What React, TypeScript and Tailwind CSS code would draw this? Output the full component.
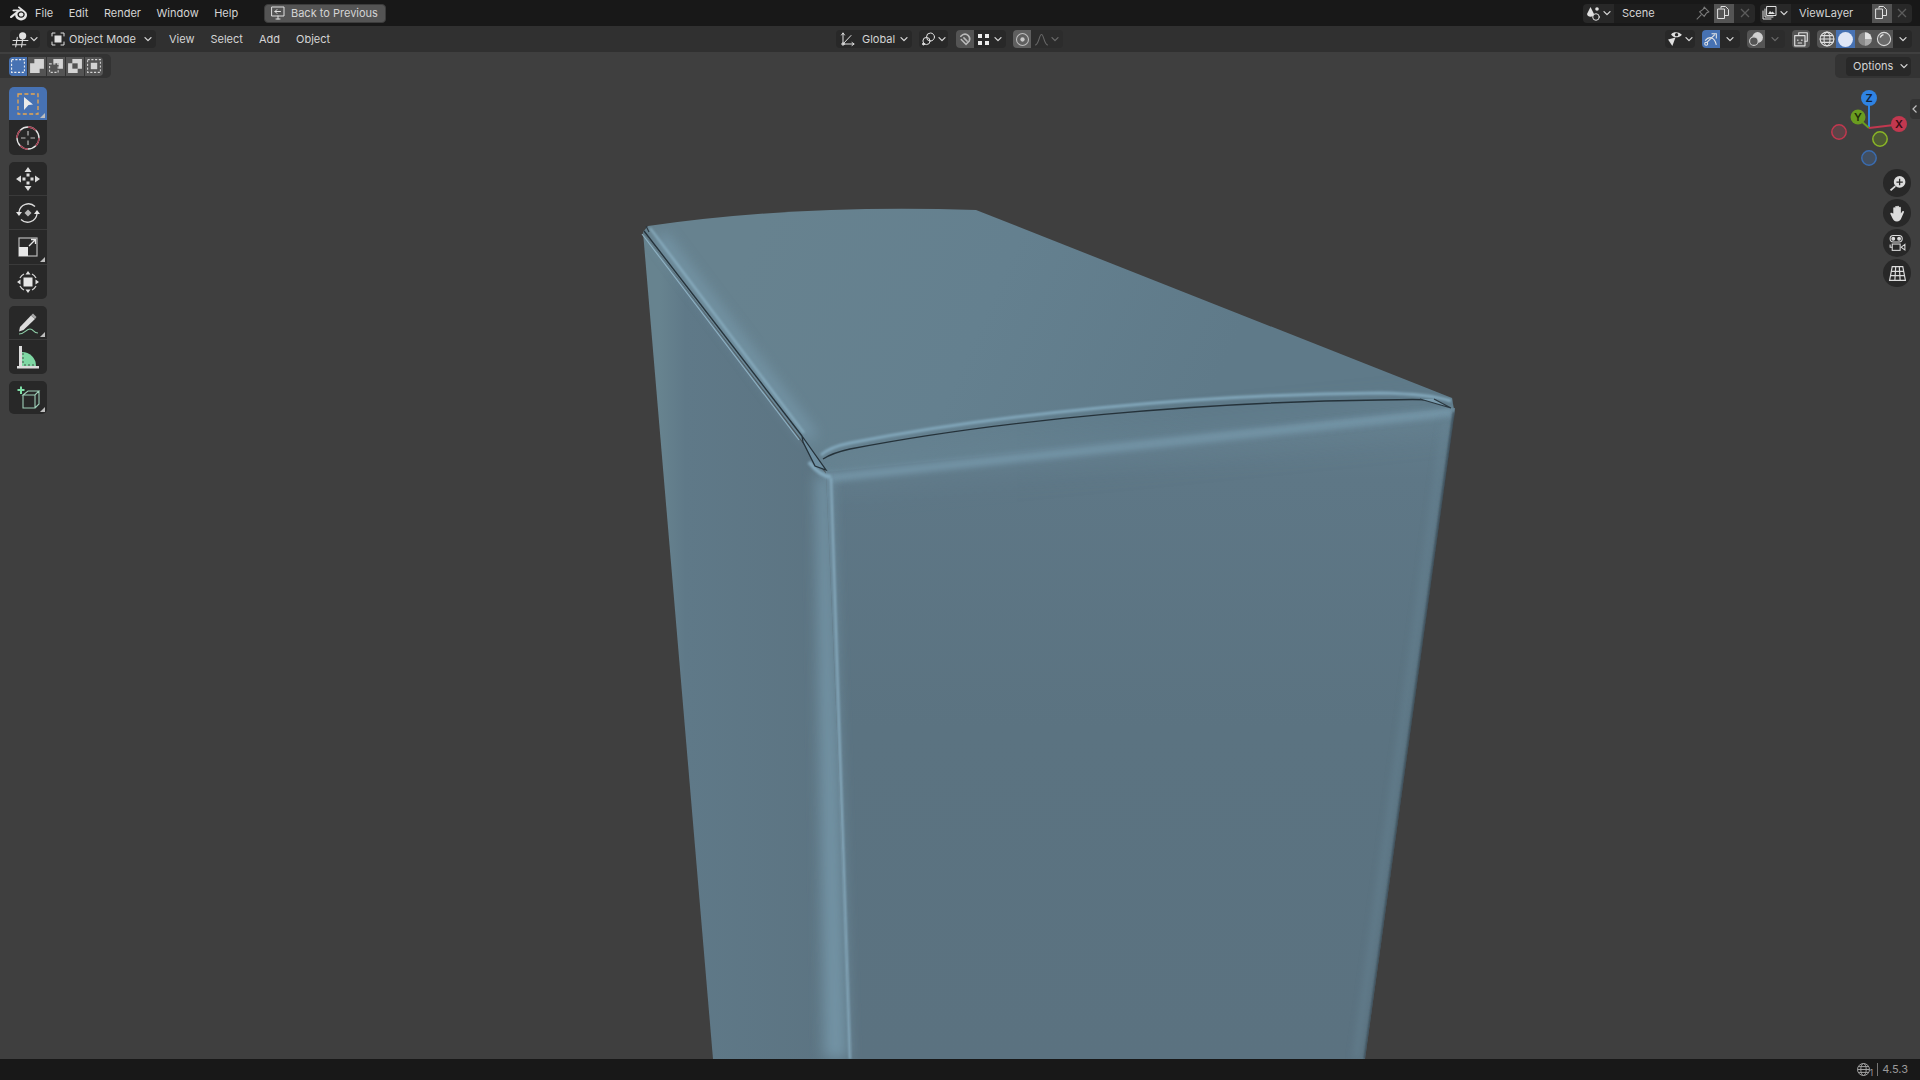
import React from "react";
import { SiBlender } from "react-icons/si";

const Chev = ({ dim = false }: { dim?: boolean }) => (
  <svg width="10" height="10" viewBox="0 0 10 10" fill="none" stroke={dim ? "#6a6a6a" : "#d8d8d8"} strokeWidth="1.3" strokeLinecap="round" strokeLinejoin="round">
    <path d="M2 3.6 L5 6.6 L8 3.6" />
  </svg>
);

const S = ({ children, size = 16, vb = 16 }: { children: React.ReactNode; size?: number; vb?: number }) => (
  <svg width={size} height={size} viewBox={`0 0 ${vb} ${vb}`} fill="none" stroke="#e0e0e0" strokeWidth="1" strokeLinecap="round" strokeLinejoin="round">
    {children}
  </svg>
);

const Tool = ({ active, corner, children, cls }: { active?: boolean; corner?: boolean; children: React.ReactNode; cls: string }) => (
  <div className={`relative w-[38px] flex items-center justify-center ${cls} ${active ? "bg-[#4772b3]" : "bg-[#282828]"}`}>
    {children}
    {corner && (
      <svg className="absolute right-[2px] bottom-[2px]" width="5" height="5" viewBox="0 0 5 5">
        <path d="M5 0 V5 H0 Z" fill="#bdbdbd" />
      </svg>
    )}
  </div>
);

const Nav = ({ children }: { children: React.ReactNode }) => (
  <div className="w-[28px] h-[28px] rounded-full bg-[#282828] flex items-center justify-center">{children}</div>
);

const Sphere = () => (
  <svg width="17" height="17" viewBox="0 0 16 16"><circle cx="8" cy="8" r="7" fill="#dfe6f5" /></svg>
);

export default function App() {
  return (
    <div className="w-[1920px] h-[1080px] flex flex-col overflow-hidden bg-[#3f3f3f] font-[Inter,sans-serif] text-[11px] text-[#d4d4d4]">
      {/* Top bar */}
      <div className="h-[26px] shrink-0 bg-[#181818] flex items-center">
        <div className="ml-[9px] w-[18px] flex justify-center text-[#e6e6e6]"><SiBlender size={17} /></div>
        <div className="ml-[8px] w-[204px] flex gap-[15.5px]">
          <span>File</span><span>Edit</span><span>Render</span><span>Window</span><span>Help</span>
        </div>
        <div className="ml-[25px] w-[122px] h-[19px] rounded-[4px] bg-[#545454] flex items-center border border-[#3c3c3c]">
          <div className="ml-[4px] w-[18px] flex justify-center">
            <S size={16}>
              <rect x="2" y="2" width="12" height="9" />
              <path d="M6 14 H10 M8 11 V14 M10.5 6.5 H5 M7 4.5 L5 6.5 L7 8.5" />
            </S>
          </div>
          <span className="ml-[4px] whitespace-nowrap">Back to Previous</span>
        </div>
        <div className="ml-auto mr-[8px] flex items-center gap-[5px]">
          <div className="flex h-[19px] w-[172px] rounded-[4px] overflow-hidden bg-[#282828]">
            <div className="w-[31px] flex items-center justify-center gap-[1px]">
              <S size={16}>
                <path d="M5.5 2 L9 9 A3.6 3.6 0 0 1 2 9 Z" fill="#e0e0e0" stroke="none" />
                <circle cx="12" cy="4" r="1.8" fill="#e0e0e0" stroke="none" />
                <circle cx="11" cy="12" r="3.3" />
              </S>
              <Chev />
            </div>
            <div className="w-[100px] bg-[#1d1d1d] flex items-center pl-[8px] relative">
              Scene
              <svg className="absolute right-[4px] top-[2px]" width="15" height="15" viewBox="0 0 13 13" fill="none" stroke="#7a7a7a" strokeWidth="0.9">
                <path d="M8 1 L12 5 L10 6 L8 9 L4 5 L7 3 Z M5.5 7.5 L1.5 11.5" />
              </svg>
            </div>
            <div className="w-[20px] bg-[#545454] flex items-center justify-center">
              <S size={16}><path d="M5 3 V1.5 H9.5 L12.5 4.5 V10.5 H9 M2 4 H8.5 V13.5 H2 Z" /></S>
            </div>
            <div className="w-[21px] flex items-center justify-center">
              <svg width="10" height="10" viewBox="0 0 10 10" stroke="#5c5c5c" strokeWidth="1.3"><path d="M1 1 L9 9 M9 1 L1 9" /></svg>
            </div>
          </div>
          <div className="flex h-[19px] w-[152px] rounded-[4px] overflow-hidden bg-[#282828]">
            <div className="w-[31px] flex items-center justify-center gap-[1px]">
              <S size={16}>
                <rect x="5" y="1.5" width="9" height="9" />
                <path d="M3 4 V12 H11 M1 6 V14 H9" />
                <path d="M6 9 L8 6 L9.5 7.5 L10.5 6.5 L13 9 Z" fill="#e0e0e0" stroke="none" />
              </S>
              <Chev />
            </div>
            <div className="w-[81px] bg-[#1d1d1d] flex items-center pl-[8px]">ViewLayer</div>
            <div className="w-[20px] bg-[#545454] flex items-center justify-center">
              <S size={16}><path d="M5 3 V1.5 H9.5 L12.5 4.5 V10.5 H9 M2 4 H8.5 V13.5 H2 Z" /></S>
            </div>
            <div className="w-[20px] flex items-center justify-center">
              <svg width="10" height="10" viewBox="0 0 10 10" stroke="#5c5c5c" strokeWidth="1.3"><path d="M1 1 L9 9 M9 1 L1 9" /></svg>
            </div>
          </div>
        </div>
      </div>

      {/* Header */}
      <div className="h-[26px] shrink-0 bg-[#303030] flex items-center relative">
        <div className="ml-[10px] w-[30px] h-[18px] rounded-[4px] bg-[#282828] flex items-center justify-center">
          <S size={17}>
            <circle cx="10" cy="4.5" r="3.4" fill="#e0e0e0" stroke="none" />
            <path d="M1 9 H15 M0.5 13 H13 M5 6 L3.5 15 M10 8 L9 15" />
          </S>
          <Chev />
        </div>
        <div className="ml-[7px] w-[109px] h-[18px] rounded-[4px] bg-[#282828] flex items-center">
          <div className="ml-[3px]">
            <S size={16}>
              <rect x="4.5" y="4.5" width="7" height="7" fill="#e0e0e0" stroke="none" />
              <path d="M2 5 V2 H5 M11 2 H14 V5 M14 11 V14 H11 M5 14 H2 V11" />
            </S>
          </div>
          <span className="ml-[3px] whitespace-nowrap">Object Mode</span>
          <div className="ml-auto mr-[3px]"><Chev /></div>
        </div>
        <div className="ml-[13px] w-[158px] flex gap-[16px]">
          <span>View</span><span>Select</span><span>Add</span><span>Object</span>
        </div>

        {/* center */}
        <div className="ml-[509px] w-[76px] h-[18px] rounded-[4px] bg-[#282828] flex items-center">
          <div className="ml-[4px]">
            <S size={16}>
              <path d="M3 13 L3 2 M1.5 4 L3 2 L4.5 4 M3 13 L14 13 M12 11.5 L14 13 L12 14.5 M3 13 L11 4.5" />
              <circle cx="3" cy="13" r="1.2" />
            </S>
          </div>
          <span className="ml-[6px]">Global</span>
          <div className="ml-auto mr-[3px]"><Chev /></div>
        </div>
        <div className="ml-[7px] w-[29px] h-[18px] rounded-[4px] bg-[#282828] flex items-center justify-center">
          <S size={16}>
            <circle cx="9.5" cy="6" r="4" />
            <circle cx="5.5" cy="10" r="3.6" />
            <circle cx="2.5" cy="13" r="1" fill="#e0e0e0" />
          </S>
          <Chev />
        </div>
        <div className="ml-[8px] w-[50px] h-[18px] rounded-[4px] overflow-hidden bg-[#282828] flex">
          <div className="w-[18px] bg-[#545454] flex items-center justify-center">
            <svg width="15" height="15" viewBox="0 0 14 14" fill="none" stroke="#b8b8b8" strokeWidth="1.4" strokeLinecap="round">
              <path d="M3 7 L7.5 11.5 L10.5 8.5 A4.5 4.5 0 0 0 4.5 2.5 L2.5 4" />
              <path d="M5.5 5.5 L8.5 8.5" />
            </svg>
          </div>
          <div className="flex-1 flex items-center justify-center gap-[3px]">
            <svg width="13" height="13" viewBox="0 0 13 13" fill="#ececec"><rect x="1" y="1" width="4" height="4" /><rect x="8" y="1" width="4" height="4" /><rect x="1" y="8" width="4" height="4" /><rect x="8" y="8" width="4" height="4" /></svg>
            <Chev />
          </div>
        </div>
        <div className="ml-[7px] w-[50px] h-[18px] rounded-[4px] overflow-hidden bg-[#2c2c2c] flex">
          <div className="w-[18px] bg-[#5f5f5f] flex items-center justify-center">
            <svg width="15" height="15" viewBox="0 0 14 14" fill="none"><circle cx="7" cy="7" r="5.6" stroke="#bcbcbc" strokeWidth="1" /><circle cx="7" cy="7" r="2" fill="#c8c8c8" /></svg>
          </div>
          <div className="flex-1 flex items-center justify-center gap-[1px]">
            <svg width="15" height="13" viewBox="0 0 15 13" fill="none" stroke="#666" strokeWidth="1.1"><path d="M1 12 C5 12 5 1.5 7.5 1.5 C10 1.5 10 12 14 12" /></svg>
            <Chev dim />
          </div>
        </div>

        {/* right */}
        <div className="ml-auto mr-[8px] flex items-center">
          <div className="w-[30px] h-[18px] rounded-[4px] bg-[#282828] flex items-center justify-center">
            <svg width="17" height="16" viewBox="0 0 16 15" fill="#e0e0e0">
              <path d="M1 8 L8 6 L5 14 Z" />
              <path d="M4 3 C6 0.5 11 0.5 14 3.5 C11 7 6 6.5 4 3.5 Z" />
              <circle cx="9" cy="3.4" r="1.6" fill="#282828" />
            </svg>
            <Chev />
          </div>
          <div className="ml-[7px] w-[38px] h-[18px] rounded-[4px] overflow-hidden bg-[#282828] flex">
            <div className="w-[18px] bg-[#4772b3] flex items-center justify-center">
              <svg width="16" height="16" viewBox="0 0 15 15" fill="none" stroke="#e6e6e6" strokeWidth="1">
                <path d="M3.5 11 L11 3.5 M8 2.5 H12.5 V7 M2 9 C6 4 11 6 12.5 13" />
                <circle cx="3" cy="12" r="1.4" />
              </svg>
            </div>
            <div className="flex-1 flex items-center justify-center"><Chev /></div>
          </div>
          <div className="ml-[7px] w-[38px] h-[18px] rounded-[4px] overflow-hidden bg-[#2c2c2c] flex">
            <div className="w-[18px] bg-[#545454] flex items-center justify-center">
              <svg width="16" height="16" viewBox="0 0 15 15" fill="none">
                <circle cx="9" cy="6" r="5" fill="#d0d0d0" />
                <circle cx="5.5" cy="9.5" r="4" fill="#545454" stroke="#d0d0d0" strokeWidth="1" />
              </svg>
            </div>
            <div className="flex-1 flex items-center justify-center"><Chev dim /></div>
          </div>
          <div className="ml-[7px] w-[18px] h-[18px] rounded-[4px] bg-[#545454] flex items-center justify-center">
            <S size={16} vb={14}>
              <path d="M5 3 V1.5 H12.5 V9 H10.5" />
              <rect x="1.5" y="4" width="9" height="9" />
              <path d="M4 8 H4.4 M7.5 8 H8 M4.5 10.5 H7.5" />
            </S>
          </div>
          <div className="ml-[7px] w-[95px] h-[18px] rounded-[4px] overflow-hidden bg-[#282828] flex">
            <div className="w-[19px] bg-[#545454] flex items-center justify-center">
              <S size={16} vb={14}>
                <circle cx="7" cy="7" r="6" />
                <ellipse cx="7" cy="7" rx="2.6" ry="6" />
                <path d="M1 7 H13 M2 4 H12 M2 10 H12" />
              </S>
            </div>
            <div className="w-[19px] bg-[#4772b3] flex items-center justify-center"><Sphere /></div>
            <div className="w-[19px] bg-[#545454] flex items-center justify-center">
              <svg width="16" height="16" viewBox="0 0 15 15"><circle cx="7.5" cy="7.5" r="6.4" fill="#8a8a8a" /><path d="M7.5 1.1 A6.4 6.4 0 0 1 13.9 7.5 L7.5 7.5 Z" fill="#e0e0e0" /><path d="M7.5 7.5 L13.9 7.5 A6.4 6.4 0 0 1 7.5 13.9 Z" fill="#a8a8a8" /></svg>
            </div>
            <div className="w-[19px] bg-[#545454] flex items-center justify-center">
              <svg width="16" height="16" viewBox="0 0 15 15" fill="none"><circle cx="7.5" cy="7.5" r="6.2" fill="#6a6a6a" stroke="#d8d8d8" strokeWidth="1" /><path d="M4 6 A4 4 0 0 1 7 3.4" stroke="#ececec" strokeWidth="1.3" /></svg>
            </div>
            <div className="flex-1 flex items-center justify-center"><Chev /></div>
          </div>
        </div>
      </div>

      {/* Viewport */}
      <div className="relative flex-1 bg-[#3f3f3f] overflow-hidden">
        <svg className="absolute inset-0 w-full h-full" viewBox="0 52 1920 1007" preserveAspectRatio="none">
          <defs>
            <filter id="b1" filterUnits="userSpaceOnUse" x="500" y="100" width="1100" height="1000"><feGaussianBlur stdDeviation="1.1" /></filter>
            <filter id="b3" filterUnits="userSpaceOnUse" x="500" y="100" width="1100" height="1000"><feGaussianBlur stdDeviation="3.5" /></filter>
            <filter id="b6" filterUnits="userSpaceOnUse" x="500" y="100" width="1100" height="1000"><feGaussianBlur stdDeviation="7" /></filter>
            <filter id="b16" filterUnits="userSpaceOnUse" x="500" y="100" width="1100" height="1000"><feGaussianBlur stdDeviation="16" /></filter>
            <linearGradient id="top" gradientUnits="userSpaceOnUse" x1="760" y1="220" x2="1200" y2="420">
              <stop offset="0" stopColor="#67828f" />
              <stop offset="0.5" stopColor="#64808f" />
              <stop offset="1" stopColor="#5f7a89" />
            </linearGradient>
            <linearGradient id="left" gradientUnits="userSpaceOnUse" x1="660" y1="0" x2="830" y2="0">
              <stop offset="0" stopColor="#67838f" />
              <stop offset="0.15" stopColor="#5f7988" />
              <stop offset="1" stopColor="#5c7482" />
            </linearGradient>
            <linearGradient id="right" gradientUnits="userSpaceOnUse" x1="0" y1="400" x2="0" y2="1059">
              <stop offset="0" stopColor="#647f8e" />
              <stop offset="0.12" stopColor="#5e7786" />
              <stop offset="0.5" stopColor="#5b7381" />
              <stop offset="1" stopColor="#5b7280" />
            </linearGradient>
            <clipPath id="boxclip">
              <path d="M648 226 Q800 204 976 210 L1452 398 L1455 412 L1365 1059 L713 1059 L643 232 Z" />
            </clipPath>
          </defs>

          {/* faces */}
          <path d="M648 226 Q800 204 976 210 L1452 398 L1454 410 L829 476 L643 232 Z" fill="url(#top)" />
          <path d="M643 232 L826 474 L851 1059 L713 1059 Z" fill="url(#left)" />
          <path d="M826 472 L1455 408 L1365 1059 L851 1059 Z" fill="url(#right)" />

          <g clipPath="url(#boxclip)">
            <path d="M660 236 L812 438" stroke="#7a9db0" strokeWidth="12" opacity="0.75" fill="none" filter="url(#b6)" />
            <path d="M828 478 L1454 412" stroke="#82a7bb" strokeWidth="6" opacity="0.9" fill="none" filter="url(#b3)" />
            <path d="M832 476 L1448 414" stroke="#6e8e9f" strokeWidth="22" opacity="0.35" fill="none" filter="url(#b16)" />
            {/* vertical crease */}
            <path d="M816 476 L830 476 L848 1059 L824 1059 Z" fill="#7697a9" opacity="0.9" filter="url(#b6)" />
            <path d="M831 478 L850 1059" stroke="#8aafc3" strokeWidth="2" fill="none" filter="url(#b1)" />
            {/* right edge */}
            <path d="M1446 420 L1356 1059" stroke="#6a8898" strokeWidth="8" opacity="0.4" fill="none" filter="url(#b3)" />
            <path d="M1454 412 L1365 1059" stroke="#33424c" strokeWidth="2" fill="none" filter="url(#b1)" />
          </g>
          <path d="M809 462 Q820 476 831 477" stroke="#83a8bc" strokeWidth="4" fill="none" filter="url(#b1)" />

          {/* top seam highlight */}
          <path d="M821 455 Q830 447 850 443 C1000 414 1200 394 1380 393 Q1430 394 1451 401" stroke="#82a7bb" strokeWidth="3" fill="none" filter="url(#b1)" />
          <path d="M823 459 Q832 453 850 449 C1000 420 1200 402 1380 400 Q1420 399 1430 400" stroke="#25323a" strokeWidth="1.4" fill="none" />
          <path d="M1420 399 L1451 408 L1434 399" stroke="#2b3840" strokeWidth="1.3" fill="#7a9cae" />

          {/* left seam */}
          <path d="M648 229 L802 434" stroke="#8bb0c3" strokeWidth="2" fill="none" filter="url(#b1)" transform="translate(2 -1)" />
          <path d="M644 231 L802 436" stroke="#25323a" strokeWidth="1.4" fill="none" />
          <path d="M643 233 L800 439" stroke="#8fb2c4" strokeWidth="1.1" fill="none" transform="translate(-1 1)" />
          <path d="M802 436 L826 470 L815 466 L803 442 Z" fill="#6d8ea0" stroke="#25323a" strokeWidth="1.3" />
          <path d="M646 226 L649 232" stroke="#2b3840" strokeWidth="1.1" />
        </svg>

        {/* Tool settings strip */}
        <div className="absolute left-0 top-[2px] w-[111px] h-[24px] bg-[#333333] rounded-r-[5px] flex items-center pl-[9px]">
          <div className="flex h-[19px] rounded-[4px] overflow-hidden gap-px">
            <div className="w-[18px] bg-[#4772b3] flex items-center justify-center">
              <svg width="16" height="16" viewBox="0 0 15 15" fill="none"><rect x="1.5" y="1.5" width="12" height="12" stroke="#f0f0f0" strokeDasharray="2 1.5" /></svg>
            </div>
            <div className="w-[18px] bg-[#545454] flex items-center justify-center">
              <svg width="16" height="16" viewBox="0 0 15 15" fill="#d4d4d4"><path d="M5 1 H14 V10 H10 V14 H1 V5 H5 Z" /></svg>
            </div>
            <div className="w-[18px] bg-[#545454] flex items-center justify-center">
              <svg width="16" height="16" viewBox="0 0 15 15"><path d="M5 1 H14 V10 H10 V5 H5 Z" fill="#d4d4d4" /><rect x="1.5" y="5.5" width="8" height="8" fill="none" stroke="#d4d4d4" strokeDasharray="2 1.5" /></svg>
            </div>
            <div className="w-[18px] bg-[#545454] flex items-center justify-center">
              <svg width="16" height="16" viewBox="0 0 15 15"><path d="M5 1 H14 V10 H10 V14 H1 V5 H5 Z" fill="#d4d4d4" /><rect x="5" y="5" width="5" height="5" fill="#545454" /></svg>
            </div>
            <div className="w-[18px] bg-[#545454] flex items-center justify-center">
              <svg width="16" height="16" viewBox="0 0 15 15"><rect x="1.5" y="1.5" width="12" height="12" fill="none" stroke="#d4d4d4" strokeDasharray="2 1.5" /><rect x="4.5" y="4.5" width="6" height="6" fill="#d4d4d4" /></svg>
            </div>
          </div>
        </div>

        {/* Options */}
        <div className="absolute right-0 top-[2px] w-[85px] h-[24px] bg-[#333333] rounded-l-[5px] flex items-center">
          <div className="ml-[11px] w-[65px] h-[19px] rounded-[4px] bg-[#282828] flex items-center pl-[7px]">
            Options
            <div className="ml-auto mr-[2px]"><Chev /></div>
          </div>
        </div>

        {/* Toolbar */}
        <div className="absolute left-[9px] top-[35px] flex flex-col">
          <Tool active corner cls="h-[33px] rounded-t-[5px]">
            <svg width="26" height="26" viewBox="0 0 26 26" fill="none">
              <rect x="3" y="3" width="20" height="20" stroke="#e8a650" strokeWidth="1.3" strokeDasharray="4 2.4" />
              <path d="M9 6 L18 13.5 L13.5 14 L9 19 Z" fill="#eaeaea" />
            </svg>
          </Tool>
          <Tool cls="h-[35px] rounded-b-[5px]">
            <svg width="26" height="26" viewBox="0 0 26 26" fill="none">
              <circle cx="13" cy="13" r="11" stroke="#e6e6e6" strokeWidth="1.3" />
              <circle cx="13" cy="13" r="11" stroke="#a03a4c" strokeWidth="1.3" strokeDasharray="8.6 8.6" />
              <path d="M13 6 V10.5 M13 15.5 V20 M6 13 H10.5 M15.5 13 H20" stroke="#bcbcbc" strokeWidth="1.2" />
            </svg>
          </Tool>
          <div className="h-[7px]" />
          <Tool cls="h-[34px] rounded-t-[5px] border-b border-[#3a3a3a]">
            <svg width="26" height="26" viewBox="0 0 26 26" fill="#dcdcdc">
              <path d="M13 1 L16.5 6 H9.5 Z M13 25 L9.5 20 H16.5 Z M1 13 L6 9.5 V16.5 Z M25 13 L20 16.5 V9.5 Z" />
              <rect x="11.5" y="7.5" width="3" height="3" /><rect x="11.5" y="15.5" width="3" height="3" /><rect x="7.5" y="11.5" width="3" height="3" /><rect x="15.5" y="11.5" width="3" height="3" />
            </svg>
          </Tool>
          <Tool cls="h-[34px] border-b border-[#3a3a3a]">
            <svg width="26" height="26" viewBox="0 0 26 26" fill="none">
              <path d="M4 12 A9.5 9.5 0 0 1 20 6.5 M22 14 A9.5 9.5 0 0 1 6 19.5" stroke="#dcdcdc" strokeWidth="1.3" />
              <path d="M1 12 H7 L4 16 Z M25 14 H19 L22 10 Z" fill="#e6e6e6" />
              <path d="M13 9.5 L16.5 13 L13 16.5 L9.5 13 Z" fill="#b8b8b8" />
            </svg>
          </Tool>
          <Tool corner cls="h-[35px] border-b border-[#3a3a3a]">
            <svg width="26" height="26" viewBox="0 0 26 26" fill="none">
              <rect x="4" y="4" width="18" height="18" stroke="#b8b8b8" strokeWidth="1.2" />
              <rect x="4" y="13" width="9" height="9" fill="#e6e6e6" />
              <path d="M14 12 L20.5 5.5 M16 5.5 H20.5 V10" stroke="#e6e6e6" strokeWidth="1.3" />
            </svg>
          </Tool>
          <Tool cls="h-[34px] rounded-b-[5px]">
            <svg width="26" height="26" viewBox="0 0 26 26" fill="none">
              <rect x="8.5" y="8.5" width="9" height="9" fill="#e6e6e6" />
              <path d="M5 9 A10 10 0 0 1 9 5 M17 5 A10 10 0 0 1 21 9 M21 17 A10 10 0 0 1 17 21 M9 21 A10 10 0 0 1 5 17" stroke="#d4d4d4" strokeWidth="1.3" />
              <path d="M13 2 L15.5 5.5 H10.5 Z M13 24 L10.5 20.5 H15.5 Z M2 13 L5.5 10.5 V15.5 Z M24 13 L20.5 15.5 V10.5 Z" fill="#e0e0e0" />
            </svg>
          </Tool>
          <div className="h-[7px]" />
          <Tool corner cls="h-[34px] rounded-t-[5px] border-b border-[#3a3a3a]">
            <svg width="26" height="26" viewBox="0 0 26 26" fill="none">
              <path d="M5 17 L16 5.5 L20 9 L8.5 20 L4 21.5 Z" fill="#dcdcdc" />
              <path d="M16 5.5 L18 3.5 L21.5 7 L20 9" fill="#a8a8a8" />
              <path d="M4 24 C10 24 11 19 15 19 C19 19 18 23 23 23" stroke="#8fcfa8" strokeWidth="1.1" />
            </svg>
          </Tool>
          <Tool cls="h-[34px] rounded-b-[5px]">
            <svg width="26" height="26" viewBox="0 0 26 26" fill="none">
              <path d="M7 22 V8 A14 14 0 0 1 21 22 Z" fill="#7fd8a4" />
              <path d="M4 2 H7 V22 H4 Z" fill="#dcdcdc" />
              <path d="M2 22 H24 V24.5 H2 Z" fill="#dcdcdc" />
              <path d="M7 6 H9 M7 10 H9 M7 14 H9 M7 18 H9 M10 20 V22 M14 20 V22 M18 20 V22" stroke="#333" strokeWidth="0.8" />
            </svg>
          </Tool>
          <div className="h-[7px]" />
          <Tool corner cls="h-[33px] rounded-[5px]">
            <svg width="26" height="26" viewBox="0 0 26 26" fill="none">
              <path d="M8 10 H20 L24 6 H13 L8 10 Z M8 10 V23 H20 V10 M20 23 L24 19 V6" stroke="#9ecfb8" strokeWidth="1.1" />
              <path d="M6 1.5 V9 M2.5 5 H9.5" stroke="#7fe0a8" strokeWidth="2" />
            </svg>
          </Tool>
        </div>

        {/* Region collapse tab */}
        <div className="absolute right-0 top-[47px] w-[10px] h-[20px] bg-[#333333] rounded-l-[4px] flex items-center justify-center">
          <svg width="8" height="10" viewBox="0 0 8 10" fill="none" stroke="#c0c0c0" strokeWidth="1.2"><path d="M5.5 1.5 L2 5 L5.5 8.5" /></svg>
        </div>

        {/* Orientation gizmo */}
        <svg className="absolute left-[1825px] top-[30px]" width="90" height="100" viewBox="1825 82 90 100">
          <circle cx="1839" cy="132" r="7.2" fill="#5c4347" stroke="#c2384f" strokeWidth="1.5" />
          <circle cx="1869" cy="158" r="7.2" fill="#424f60" stroke="#3a6cb0" strokeWidth="1.5" />
          <path d="M1869 128 L1869 104" stroke="#2f83e3" strokeWidth="2" />
          <path d="M1869 128 L1860 120" stroke="#6a9c20" strokeWidth="2" />
          <path d="M1869 128 L1894 125" stroke="#c2384f" strokeWidth="2" />
          <circle cx="1869" cy="98" r="8" fill="#2f83e3" />
          <circle cx="1858" cy="117" r="7.5" fill="#6a9c20" />
          <circle cx="1899" cy="124" r="8" fill="#c2384f" />
          <circle cx="1880" cy="139" r="7.2" fill="#4d5a34" stroke="#8ab526" strokeWidth="1.5" />
          <text x="1869" y="102" textAnchor="middle" fontFamily="Inter" fontSize="11" fontWeight="600" fill="#10233a">Z</text>
          <text x="1858" y="121" textAnchor="middle" fontFamily="Inter" fontSize="11" fontWeight="600" fill="#1e2c08">Y</text>
          <text x="1899" y="128" textAnchor="middle" fontFamily="Inter" fontSize="11" fontWeight="600" fill="#3a0c14">X</text>
        </svg>

        {/* Nav buttons */}
        <div className="absolute left-[1883px] top-[117px] flex flex-col gap-[2px]">
          <Nav>
            <svg width="19" height="19" viewBox="0 0 18 18" fill="#dcdcdc">
              <path fillRule="evenodd" d="M11 2 A5.5 5.5 0 1 1 11 13 A5.5 5.5 0 1 1 11 2 Z M10.4 4.5 V7 H8 V8.2 H10.4 V10.6 H11.6 V8.2 H14 V7 H11.6 V4.5 Z" />
              <path d="M6.5 11 L1.8 15 L3 16.2 L7.5 12 Z" />
            </svg>
          </Nav>
          <Nav>
            <svg width="19" height="19" viewBox="0 0 18 18" fill="#dcdcdc">
              <path d="M5 9 V4 A0.9 0.9 0 0 1 6.8 4 V8 V2.7 A0.9 0.9 0 0 1 8.6 2.7 V8 V2.5 A0.9 0.9 0 0 1 10.4 2.5 V8 V3.5 A0.9 0.9 0 0 1 12.2 3.5 V9 L13.5 7 C14.3 6 15.6 6.8 15 8 L13 12.5 C12 15.5 10.5 16.5 8.5 16.5 C6 16.5 5 15 4 13 L2.3 9.5 C1.8 8.5 3 7.8 3.7 8.5 Z" />
            </svg>
          </Nav>
          <Nav>
            <svg width="19" height="19" viewBox="0 0 18 18" fill="none" stroke="#dcdcdc" strokeWidth="1">
              <rect x="2" y="1.5" width="11.5" height="6" rx="3" />
              <circle cx="5" cy="4.5" r="1.3" fill="#dcdcdc" /><circle cx="10.5" cy="4.5" r="1.3" fill="#dcdcdc" />
              <rect x="4" y="9.5" width="7.5" height="6" />
              <path d="M2 10 V12.5 H4 M16 9.8 L12.5 12.5 L16 15.2 Z" />
            </svg>
          </Nav>
          <Nav>
            <svg width="19" height="19" viewBox="0 0 18 18" fill="none" stroke="#dcdcdc" strokeWidth="1.1">
              <path d="M4 2.5 H14 L16.5 15.5 H1.5 Z M7.3 2.5 L6.5 15.5 M10.7 2.5 L11.5 15.5 M3 7 H15 M2.2 11 H15.8" />
            </svg>
          </Nav>
        </div>
      </div>

      {/* Status bar */}
      <div className="h-[21px] shrink-0 bg-[#181818] flex items-center justify-end pr-[12px] text-[11px] text-[#9a9a9a]">
        <svg width="15" height="15" viewBox="0 0 15 15" fill="none" stroke="#a0a0a0" strokeWidth="1">
          <circle cx="7.5" cy="7.5" r="6" />
          <ellipse cx="7.5" cy="7.5" rx="2.7" ry="6" />
          <path d="M1.5 7.5 H13.5 M2.3 4.6 H12.7 M2.3 10.4 H12.7" />
        </svg>
        <span className="text-[9px] self-end mb-[1px] ml-[-1px]">1</span>
        <div className="ml-[4px] w-px h-[13px] bg-[#777777]" />
        <span className="ml-[4px]">4.5.3</span>
      </div>
    </div>
  );
}
